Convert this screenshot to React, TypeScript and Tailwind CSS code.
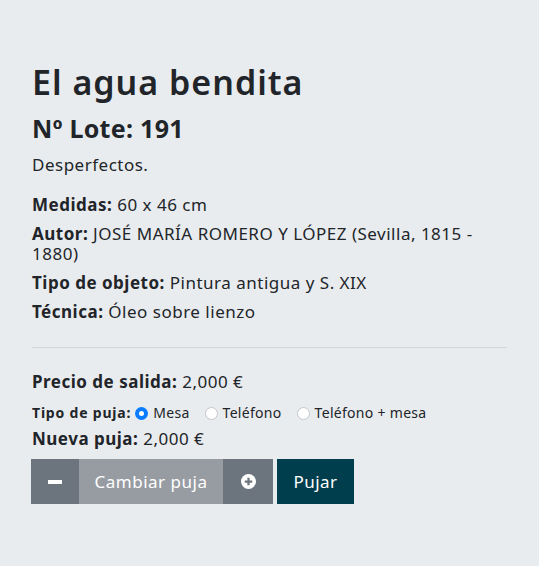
import React from 'react';

const Radio: React.FC<{ checked?: boolean; label: string }> = ({ checked, label }) => (
  <label className="flex items-center">
    <span
      className={`flex h-[13px] w-[13px] items-center justify-center rounded-full ${
        checked ? 'bg-[#0a7cff]' : 'border border-[#c4c6ca] bg-white'
      }`}
    >
      {checked && <span className="h-[5px] w-[5px] rounded-full bg-white" />}
    </span>
    <span className="ml-[5px]">{label}</span>
  </label>
);

const App: React.FC = () => {
  return (
    <div className="min-h-[566px] bg-[#e9ecef] px-8 pt-[61px] font-['Noto_Sans',sans-serif] text-[#212529]">
      <h1 className="text-[34px] font-semibold leading-[42px] tracking-[1px]">El agua bendita</h1>
      <h2 className="mt-[11px] text-[25px] font-bold leading-[29px] tracking-[0.3px]">Nº Lote: 191</h2>
      <p className="mt-[12px] text-[17px] leading-[20px] tracking-[0.5px]">Desperfectos.</p>

      <div className="mt-[20px] flex flex-col gap-[9px] text-[17px] leading-[20px] tracking-[0.5px]">
        <p>
          <b>Medidas:</b> 60 x 46 cm
        </p>
        <p>
          <b>Autor:</b> JOSÉ MARÍA ROMERO Y LÓPEZ (Sevilla, 1815 - 1880)
        </p>
        <p>
          <b>Tipo de objeto:</b> Pintura antigua y S. XIX
        </p>
        <p>
          <b>Técnica:</b> Óleo sobre lienzo
        </p>
      </div>

      <hr className="mt-[25px] border-t border-[#d3d6da]" />

      <p className="mt-[24px] text-[17px] leading-[20px] tracking-[0.5px]">
        <b>Precio de salida:</b> 2,000 €
      </p>
      <div className="mt-[11px] flex items-center text-[14px] leading-[20px] tracking-[0.3px]">
        <b className="mr-[4px] tracking-[0.8px]">Tipo de puja:</b>
        <div className="flex items-center gap-[15px]">
          <Radio checked label="Mesa" />
          <Radio label="Teléfono" />
          <Radio label="Teléfono + mesa" />
        </div>
      </div>
      <p className="mt-[6px] text-[17px] leading-[20px] tracking-[0.5px]">
        <b>Nueva puja:</b> 2,000 €
      </p>

      <div className="-ml-px mt-[10px] flex h-[45px] text-[17px] tracking-[0.5px]">
        <div className="flex">
          <button className="flex w-[48px] items-center justify-center bg-[#6c757d]">
            <span className="h-[4px] w-[14px] bg-white" />
          </button>
          <button className="flex w-[144px] items-center justify-center bg-[#979ca3] text-white">
            Cambiar puja
          </button>
          <button className="flex w-[50px] items-center justify-center bg-[#6c757d]">
            <svg viewBox="0 0 16 16" className="h-[15px] w-[15px]">
              <circle cx="8" cy="8" r="8" fill="white" />
              <path d="M8 4v8M4 8h8" stroke="#6c757d" strokeWidth="2.4" />
            </svg>
          </button>
        </div>
        <button className="ml-[4px] flex w-[77px] items-center justify-center bg-[#003d4d] text-white">
          Pujar
        </button>
      </div>
    </div>
  );
};

export default App;
